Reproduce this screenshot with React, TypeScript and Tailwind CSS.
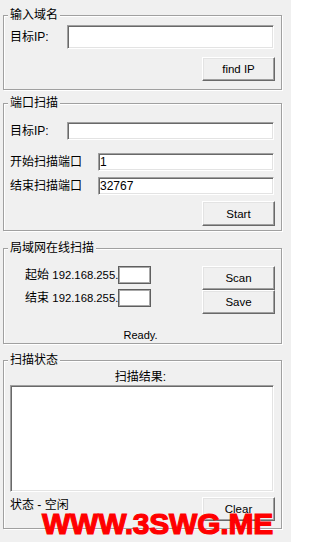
import React from "react";

const sunken =
  "bg-white border border-t-[#a0a0a0] border-l-[#a0a0a0] border-b-white border-r-white shadow-[inset_1px_1px_0_#696969,inset_-1px_-1px_0_#e3e3e3]";
const raised =
  "bg-[#f0f0f0] border border-t-white border-l-white border-b-[#696969] border-r-[#696969] shadow-[inset_-1px_-1px_0_#a0a0a0,inset_1px_1px_0_#e3e3e3] text-[11.5px] leading-[14px] text-black flex items-center justify-center";
const ipBox =
  "bg-white border border-[#5f5f5f] shadow-[inset_0_0_0_1px_#a8a8a8] w-[33px] h-[18px]";

const Group = ({
  title,
  className,
  children,
}: {
  title: string;
  className?: string;
  children: React.ReactNode;
}) => (
  <fieldset
    className={
      "w-[279px] border border-[#a0a0a0] shadow-[1px_1px_0_#ffffff,inset_1px_1px_0_#ffffff] " +
      (className ?? "")
    }
  >
    <legend className="relative ml-[4px] px-[2px] bg-[#f0f0f0] text-[12px] leading-[14px]">
      {title}
    </legend>
    {children}
  </fieldset>
);

const TextBox = ({ w, h, value }: { w: string; h: string; value?: string }) => (
  <input
    readOnly
    defaultValue={value}
    className={`${sunken} ${w} ${h} pl-[1px] py-0 text-[12px] outline-none`}
  />
);

const IpRow = ({ label }: { label: string }) => (
  <div className="flex items-center">
    <span className="w-[93px] pr-[3px] text-right whitespace-nowrap text-[12px] leading-[14px]">
      {label} <span className="text-[11.3px]">192.168.255.</span>
    </span>
    <div className={ipBox} />
  </div>
);

export default function App() {
  return (
    <div className="relative w-[291px] h-[542px] overflow-hidden bg-[#f0f0f0] text-black font-['Liberation_Sans','Noto_Sans_CJK_SC',sans-serif]">
      <div className="flex flex-col pl-[3px]">
        {/* 输入域名 */}
        <Group title="输入域名" className="mt-[8px]">
          <div className="flex flex-col pl-[6px] pr-[6px] pb-[8px]">
            <div className="mt-[3px] flex items-center">
              <span className="w-[57px] text-[12px] leading-[14px]">目标IP:</span>
              <TextBox w="w-[207px]" h="h-[24px]" />
            </div>
            <button className={`${raised} mt-[8px] self-end w-[73px] h-[24px]`}>
              find IP
            </button>
          </div>
        </Group>

        {/* 端口扫描 */}
        <Group title="端口扫描" className="mt-[6px]">
          <div className="flex flex-col pl-[6px] pr-[6px] pb-[4px]">
            <div className="mt-[12px] flex items-center">
              <span className="w-[57px] text-[12px] leading-[14px]">目标IP:</span>
              <TextBox w="w-[207px]" h="h-[18px]" />
            </div>
            <div className="mt-[13px] flex items-center">
              <span className="w-[88px] text-[12px] leading-[14px]">开始扫描端口</span>
              <TextBox w="w-[176px]" h="h-[18px]" value="1" />
            </div>
            <div className="mt-[6px] flex items-center">
              <span className="w-[88px] text-[12px] leading-[14px]">结束扫描端口</span>
              <TextBox w="w-[176px]" h="h-[18px]" value="32767" />
            </div>
            <button className={`${raised} mt-[6px] self-end w-[73px] h-[25px]`}>
              Start
            </button>
          </div>
        </Group>

        {/* 局域网在线扫描 */}
        <Group title="局域网在线扫描" className="mt-[10px]">
          <div className="flex flex-col pl-[6px] pr-[6px] pb-[1px]">
            <div className="mt-[11px] flex justify-between">
              <div className="flex flex-col gap-[5px] ml-[15px]">
                <IpRow label="起始" />
                <IpRow label="结束" />
              </div>
              <div className="flex flex-col">
                <button className={`${raised} w-[73px] h-[24px]`}>Scan</button>
                <button className={`${raised} w-[73px] h-[24px]`}>Save</button>
              </div>
            </div>
            <div className="mt-[14px] pr-[4px] text-center text-[11px] leading-[14px]">
              Ready.
            </div>
          </div>
        </Group>

        {/* 扫描状态 */}
        <Group title="扫描状态" className="mt-[9px]">
          <div className="flex flex-col pl-[6px] pr-[6px] pb-[7px]">
            <div className="mt-[3px] pr-[4px] text-center text-[12px] leading-[14px]">
              扫描结果:
            </div>
            <div className={`${sunken} mt-[1px] w-[264px] h-[107px]`} />
            <div className="mt-[5px] flex justify-between items-start">
              <span className="mt-[1px] text-[12px] leading-[14px]">状态 - 空闲</span>
              <button className={`${raised} w-[73px] h-[24px]`}>Clear</button>
            </div>
          </div>
        </Group>
      </div>

      {/* watermark */}
      <div className="absolute left-[42px] top-[509px] text-[30px] leading-[30px] font-bold tracking-[-0.2px] text-[#ff0000] [-webkit-text-stroke:1.2px_#ff0000] whitespace-nowrap font-['Liberation_Sans',sans-serif]">
        WWW.3SWG.ME
      </div>
    </div>
  );
}
